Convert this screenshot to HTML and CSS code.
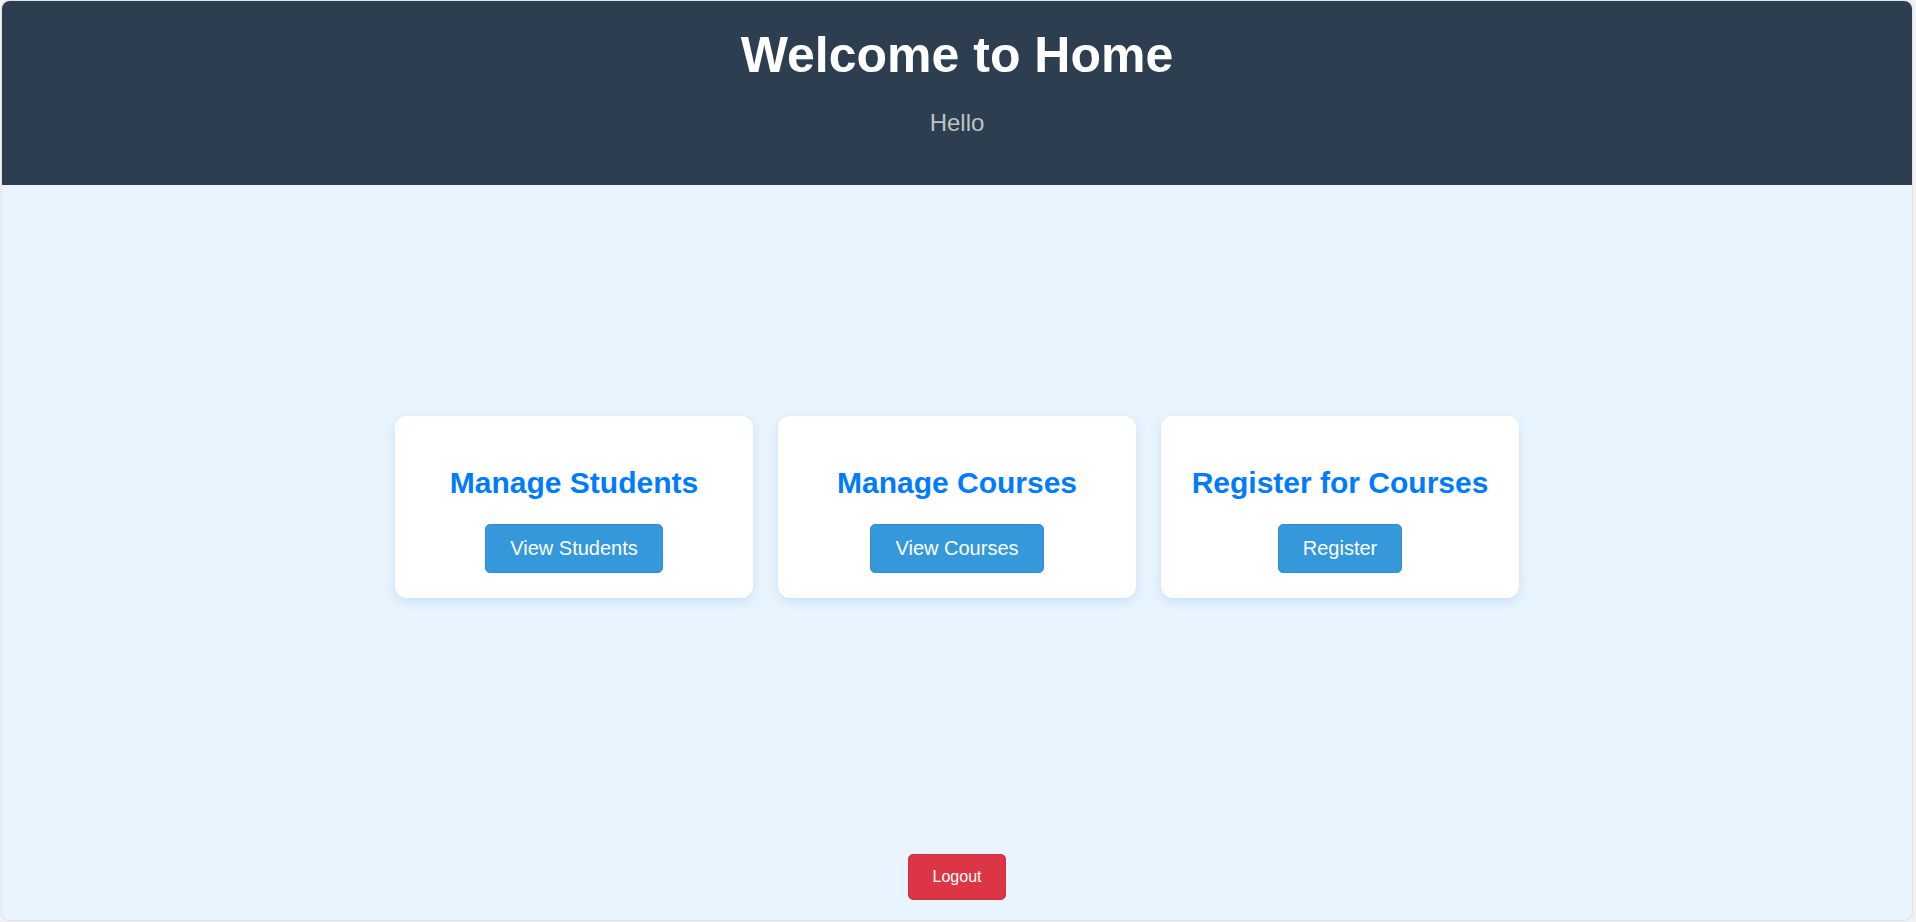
FILE: index.html
```html
<!DOCTYPE html>
<html lang="en">
<head>
<meta charset="utf-8">
<title>Home</title>
<link rel="stylesheet" href="styles.css">
</head>
<body>
<div class="app">
  <header class="hero">
    <h1 class="hero-title">Welcome to Home</h1>
    <p class="hero-sub">Hello</p>
  </header>
  <main class="main">
    <section class="cards">
      <div class="card">
        <h2 class="card-title">Manage Students</h2>
        <button class="btn btn-primary">View Students</button>
      </div>
      <div class="card">
        <h2 class="card-title">Manage Courses</h2>
        <button class="btn btn-primary">View Courses</button>
      </div>
      <div class="card">
        <h2 class="card-title">Register for Courses</h2>
        <button class="btn btn-primary">Register</button>
      </div>
    </section>
    <footer class="footer">
      <button class="btn btn-danger">Logout</button>
    </footer>
  </main>
</div>
</body>
</html>
```
FILE: styles.css
```css
* { box-sizing: border-box; }
html, body { height: 100%; }
body {
  margin: 0;
  padding: 1px 4px 2px 2px;
  background: #f1f1f1;
  font-family: "Liberation Sans", Arial, sans-serif;
}
.app {
  height: 100%;
  display: flex;
  flex-direction: column;
  border-radius: 8px;
  overflow: hidden;
  background: #e8f5fe;
  box-shadow: 0 0 2px rgba(0,0,0,0.2);
}
.hero {
  background: #2c3e50;
  color: #fff;
  text-align: center;
  padding: 25px 20px 24px;
  height: 184px;
}
.hero-title {
  margin: 0;
  font-size: 50px;
  font-weight: bold;
}
.hero-sub {
  margin: 25px 0 0;
  font-size: 24px;
  color: #bdc3c7;
}
.main {
  flex: 1;
  display: flex;
  flex-direction: column;
}
.cards {
  flex: 1;
  display: flex;
  justify-content: center;
  align-items: center;
  gap: 25px;
}
.card {
  width: 358px;
  background: #fff;
  border-radius: 12px;
  padding: 25px;
  text-align: center;
  box-shadow: 0 4px 12px rgba(40, 100, 170, 0.15);
}
.card-title {
  margin: 25px 0 24px;
  font-size: 30px;
  font-weight: bold;
  color: #007bff;
  white-space: nowrap;
}
.btn {
  font-family: "Liberation Sans", Arial, sans-serif;
  border-radius: 5px;
  cursor: pointer;
  color: #fff;
}
.btn-primary {
  font-size: 20px;
  padding: 12px 24px;
  background: #3498db;
  border: 1px solid #2f8fd0;
}
.footer {
  display: flex;
  justify-content: center;
  padding: 25px 0 20px;
}
.btn-danger {
  font-size: 16px;
  padding: 13px 24px;
  background: #dc3545;
  border: 1px solid #d32f40;
}
```
